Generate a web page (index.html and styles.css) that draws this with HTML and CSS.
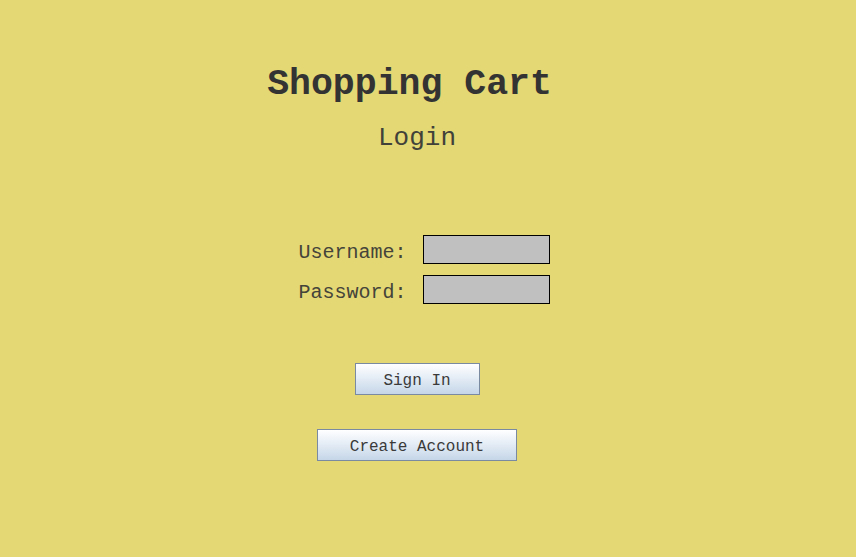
FILE: index.html
```html
<!DOCTYPE html>
<html>
<head>
<meta charset="utf-8">
<link rel="stylesheet" href="styles.css">
<title>Shopping Cart</title>
</head>
<body>
<div class="page">
  <h1 class="title">Shopping Cart</h1>
  <h2 class="subtitle">Login</h2>
  <form class="form">
    <label class="label" for="u">Username:</label>
    <input class="field" id="u" type="text">
    <label class="label" for="p">Password:</label>
    <input class="field" id="p" type="password">
  </form>
  <div class="actions">
    <button class="btn btn-sign" type="button">Sign In</button>
    <button class="btn btn-create" type="button">Create Account</button>
  </div>
</div>
</body>
</html>
```

FILE: styles.css
```css
html, body {
  margin: 0;
  padding: 0;
  background: #e3d873;
  height: 100%;
}
body {
  font-family: "Courier New", "Nimbus Mono PS", "Nimbus Mono L", FreeMono, "Liberation Mono", monospace;
  color: #333333;
}
.page {
  width: 834px;
  display: flex;
  flex-direction: column;
  align-items: center;
  padding-top: 64px;
}
.title {
  margin: 0 0 0 -15px;
  font-size: 36.5px;
  font-weight: bold;
  line-height: 42px;
  color: #333333;
}
.subtitle {
  margin: 16px 0 0 0;
  font-size: 26px;
  font-weight: normal;
  line-height: 32px;
  color: #41413a;
}
.form {
  margin: 80px 0 0 14px;
  display: grid;
  grid-template-columns: auto auto;
  column-gap: 16px;
  row-gap: 10px;
  align-items: center;
}
.label {
  font-size: 20px;
  text-align: right;
  color: #45443a;
  padding-top: 7px;
}
.field {
  width: 127px;
  height: 29px;
  box-sizing: border-box;
  border: 1px solid #000;
  background: #c0c0c0;
  margin: 0;
  padding: 0;
}
.actions {
  margin-top: 59px;
  display: flex;
  flex-direction: column;
  align-items: center;
  gap: 34px;
}
.btn {
  font-family: "Courier New", "Nimbus Mono PS", "Nimbus Mono L", FreeMono, "Liberation Mono", monospace;
  font-size: 16px;
  color: #3a3a3a;
  height: 32px;
  box-sizing: border-box;
  border: 1px solid #7a8aa0;
  background: linear-gradient(to bottom, #ffffff 0%, #e8eff7 40%, #c5d6e8 100%);
  padding: 4px 0 0 0;
  margin: 0;
}
.btn-sign { width: 125px; }
.btn-create { width: 200px; }
```
